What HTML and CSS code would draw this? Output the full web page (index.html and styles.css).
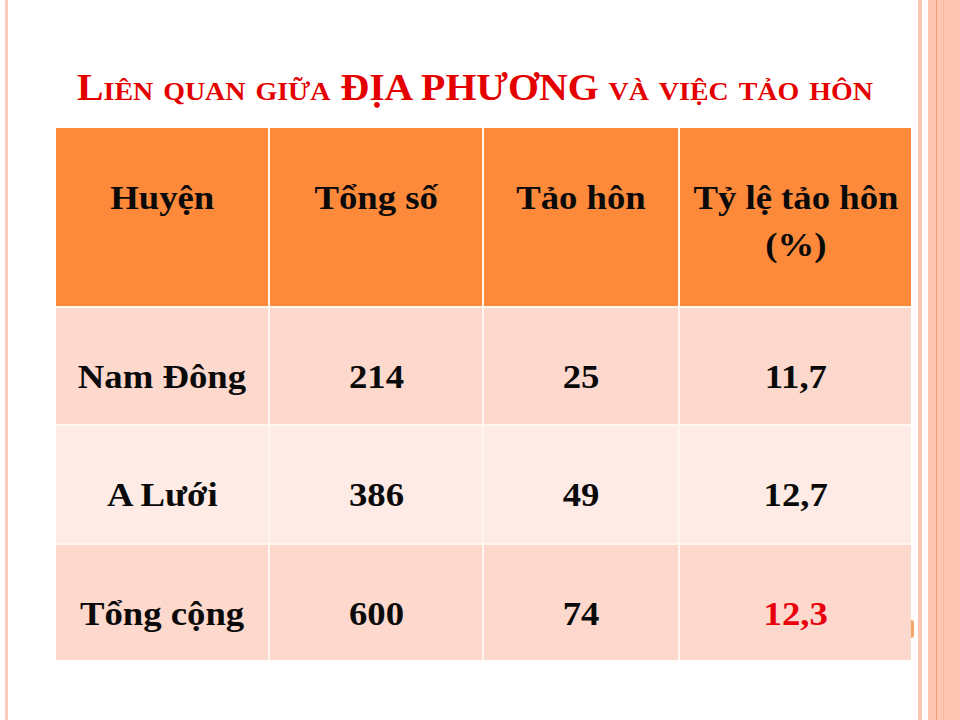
FILE: index.html
```html
<!DOCTYPE html>
<html lang="vi">
<head>
<meta charset="utf-8">
<title>Liên quan giữa địa phương và việc tảo hôn</title>
<link rel="stylesheet" href="styles.css">
</head>
<body>
<div class="slide">
  <div class="left-rule"></div>
  <main class="content">
    <h1 class="title"><span class="title-text">Liên quan giữa <span class="caps">ĐỊA PHƯƠNG</span> và việc tảo hôn</span></h1>
    <div class="table">
      <div class="cell head"><span class="txt">Huyện</span></div>
      <div class="cell head"><span class="txt">Tổng số</span></div>
      <div class="cell head"><span class="txt">Tảo hôn</span></div>
      <div class="cell head"><span class="txt">Tỷ lệ tảo hôn<br>(%)</span></div>

      <div class="cell dark"><span class="txt">Nam Đông</span></div>
      <div class="cell dark"><span class="txt">214</span></div>
      <div class="cell dark"><span class="txt">25</span></div>
      <div class="cell dark"><span class="txt">11,7</span></div>

      <div class="cell light"><span class="txt">A Lưới</span></div>
      <div class="cell light"><span class="txt">386</span></div>
      <div class="cell light"><span class="txt">49</span></div>
      <div class="cell light"><span class="txt">12,7</span></div>

      <div class="cell dark"><span class="txt">Tổng cộng</span></div>
      <div class="cell dark"><span class="txt">600</span></div>
      <div class="cell dark"><span class="txt">74</span></div>
      <div class="cell dark red"><span class="txt">12,3</span><span class="blip"></span></div>
    </div>
  </main>
  <div class="right-deco">
    <div class="stripe"></div>
    <div class="band"></div>
  </div>
</div>
</body>
</html>
```
FILE: styles.css
```css
html, body {
  margin: 0;
  padding: 0;
  background: #ffffff;
}

.slide {
  display: flex;
  width: 960px;
  height: 720px;
  overflow: hidden;
  background: #ffffff;
  font-family: "Liberation Serif", "Times New Roman", serif;
}

.left-rule {
  width: 3px;
  margin-left: 5px;
  background: #f9c9b9;
}

.content {
  width: 910px;
  display: flex;
  flex-direction: column;
}

.title {
  margin: 0;
  padding-top: 68px;
  height: 60px;
  padding-left: 69px;
  font-size: 37px;
  line-height: 40px;
  font-weight: bold;
  font-variant: small-caps;
  color: #e50000;
  white-space: nowrap;
}

.title-text {
  display: inline-block;
  transform: scaleX(1.075);
  transform-origin: left center;
}

.title .caps {
  font-variant: normal;
}

.table {
  margin-left: 48px;
  width: 855px;
  display: grid;
  grid-template-columns: 212px 212px 194px 231px;
  grid-template-rows: 178px 116px 117px 115px;
  gap: 2px;
  background: #fff6f2;
}

.cell {
  position: relative;
  text-align: center;
  font-size: 34px;
  line-height: 47px;
  font-weight: bold;
  color: #0a0a0a;
  padding-top: 45px;
  box-sizing: border-box;
}

.txt {
  display: inline-block;
  transform: scaleX(1.08);
}

.head {
  background: #fd893b;
  padding-top: 46px;
}

.dark {
  background: #fdd8cd;
}

.light {
  background: #feebe5;
}

.red {
  color: #e8000c;
}

.blip {
  position: absolute;
  right: -3px;
  top: 75px;
  width: 3px;
  height: 18px;
  border-radius: 0 4px 4px 0;
  background: #f4a56a;
}

.right-deco {
  display: flex;
  gap: 6px;
}

.stripe {
  width: 4px;
  background: #fcc6b3;
}

.band {
  width: 32px;
  background: linear-gradient(to right,
    #fcc6b2 0, #fcc6b2 8px,
    #ef9c78 8px, #ef9c78 9px,
    #fcc6b2 9px, #fcc6b2 15px,
    #f9b99f 15px, #f9b99f 16px,
    #fcc6b2 16px);
}
```
